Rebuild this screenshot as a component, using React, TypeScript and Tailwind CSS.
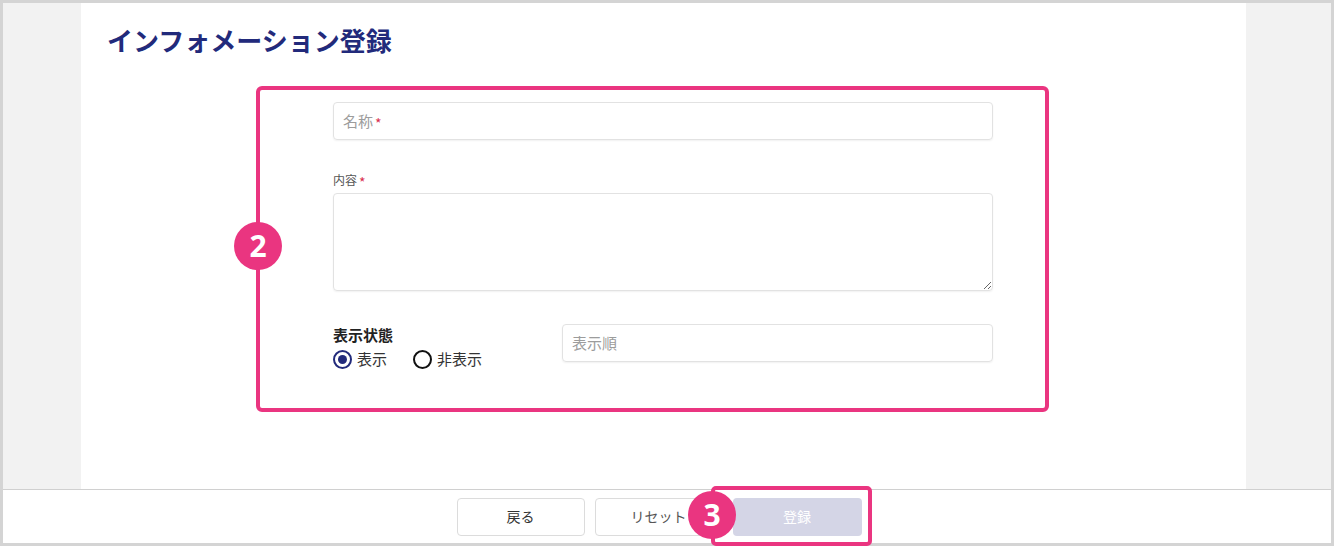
import React from 'react'

const font = { fontFamily: '"Noto Sans CJK JP", "Noto Sans", sans-serif' }

const Req = () => <span className="ml-[2px] text-[14px] leading-none text-[#d9304f] translate-y-[2px]">*</span>

const Badge = ({ n, className }: { n: string; className: string }) => (
  <div
    className={`absolute w-[48px] h-[48px] rounded-full bg-[#ea3580] text-white text-[30px] font-bold leading-none flex items-center justify-center ${className}`}
    style={{ fontFamily: '"Open Sans", "Noto Sans", sans-serif' }}
  >
    {n}
  </div>
)

const App: React.FC = () => {
  return (
    <div className="relative w-[1334px] h-[552px] bg-white" style={font}>
      <div className="h-[546px] border-[3px] border-[#d4d4d4] bg-[#f2f2f2] flex flex-col">
        <main className="flex-1 flex">
          <div className="ml-[78px] w-[1165px] bg-white">
            <h1 className="pt-[19px] pl-[26px] text-[26px] leading-[36px] font-bold text-[#222a7b]">
              インフォメーション登録
            </h1>

            <div className="ml-[252px] w-[660px]">
              <div className="mt-[44px] h-[38px] rounded-[4px] border border-[#e2e2e2] shadow-[0_1px_2px_rgba(0,0,0,0.06)] flex items-center pl-[9px]">
                <span className="text-[15px] text-[#9c9c9c]">名称</span>
                <Req />
              </div>

              <div className="mt-[32px] h-[16px] flex items-center text-[12px] text-[#555]">
                内容
                <Req />
              </div>
              <textarea className="mt-[5px] block w-full h-[98px] rounded-[4px] border border-[#e2e2e2] shadow-[0_1px_2px_rgba(0,0,0,0.06)] outline-none" />

              <div className="mt-[33px] flex items-start">
                <div className="w-[229px] pt-[1px]">
                  <div className="text-[15px] leading-[20px] font-bold text-[#222]">表示状態</div>
                  <div className="mt-[4px] flex items-center h-[20px] text-[15px] text-[#333]">
                    <span className="w-[19px] h-[19px] rounded-full border-2 border-[#222a7b] flex items-center justify-center">
                      <span className="w-[9px] h-[9px] rounded-full bg-[#222a7b]" />
                    </span>
                    <span className="ml-[5px]">表示</span>
                    <span className="ml-[26px] w-[19px] h-[19px] rounded-full border-2 border-[#111]" />
                    <span className="ml-[5px]">非表示</span>
                  </div>
                </div>
                <div className="flex-1 h-[38px] rounded-[4px] border border-[#e2e2e2] shadow-[0_1px_2px_rgba(0,0,0,0.06)] flex items-center pl-[9px] text-[15px] text-[#9c9c9c]">
                  表示順
                </div>
              </div>
            </div>
          </div>
        </main>

        <footer className="h-[54px] border-t border-[#d0d0d0] bg-white flex items-center justify-center gap-[10px] pr-[16px]">
          <button className="w-[128px] h-[38px] rounded-[4px] border border-[#dcdcdc] bg-white text-[14px] text-[#333]">
            戻る
          </button>
          <button className="w-[128px] h-[38px] rounded-[4px] border border-[#dcdcdc] bg-white text-[14px] text-[#555]">
            リセット
          </button>
          <button className="w-[129px] h-[38px] rounded-[4px] bg-[#d4d5e6] text-[14px] text-white">
            登録
          </button>
        </footer>
      </div>

      {/* annotations */}
      <div className="absolute left-[256px] top-[86px] w-[793px] h-[326px] rounded-[6px] border-4 border-[#ea3580]" />
      <Badge n="2" className="left-[234px] top-[222px]" />
      <div className="absolute left-[711px] top-[486px] w-[161px] h-[60px] rounded-[5px] border-4 border-[#ea3580]" />
      <Badge n="3" className="left-[688px] top-[491px]" />
    </div>
  )
}

export default App
